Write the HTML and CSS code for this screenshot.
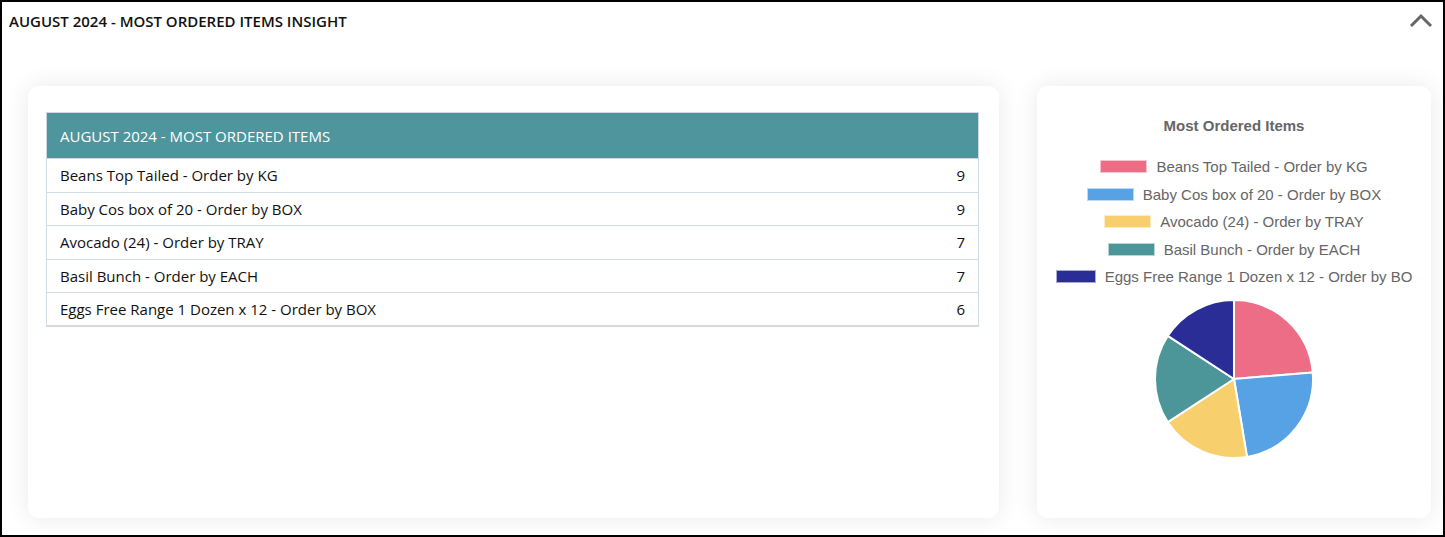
FILE: index.html
```html
<!DOCTYPE html>
<html lang="en">

<head>
  <meta charset="UTF-8">
  <meta name="viewport" content="width=device-width, initial-scale=1.0">
  <title>Most Ordered Items Insight</title>
  <link rel="stylesheet" href="styles.css">
</head>

<body>
  <div class="insight-panel">
    <header class="panel-header">
      <h2>AUGUST 2024 - MOST ORDERED ITEMS INSIGHT</h2>
      <svg class="collapse-icon" width="24" height="16" viewBox="0 0 24 16">
        <path d="M2 14 L12 4 L22 14" fill="none" stroke="#666" stroke-width="3" />
      </svg>
    </header>

    <div class="panel-body">
      <section class="card table-card">
        <table class="items-table">
          <thead>
            <tr>
              <th colspan="2">AUGUST 2024 - MOST ORDERED ITEMS</th>
            </tr>
          </thead>
          <tbody>
            <tr>
              <td>Beans Top Tailed - Order by KG</td>
              <td class="count">9</td>
            </tr>
            <tr>
              <td>Baby Cos box of 20 - Order by BOX</td>
              <td class="count">9</td>
            </tr>
            <tr>
              <td>Avocado (24) - Order by TRAY</td>
              <td class="count">7</td>
            </tr>
            <tr>
              <td>Basil Bunch - Order by EACH</td>
              <td class="count">7</td>
            </tr>
            <tr>
              <td>Eggs Free Range 1 Dozen x 12 - Order by BOX</td>
              <td class="count">6</td>
            </tr>
          </tbody>
        </table>
      </section>

      <section class="card chart-card">
        <h3 class="chart-title">Most Ordered Items</h3>
        <ul class="legend">
          <li><span class="swatch pink"></span>Beans Top Tailed - Order by KG</li>
          <li><span class="swatch blue"></span>Baby Cos box of 20 - Order by BOX</li>
          <li><span class="swatch yellow"></span>Avocado (24) - Order by TRAY</li>
          <li><span class="swatch teal"></span>Basil Bunch - Order by EACH</li>
          <li><span class="swatch navy narrow"></span>Eggs Free Range 1 Dozen x 12 - Order by BO</li>
        </ul>
        <svg class="pie" width="170" height="170" viewBox="-85 -85 170 170">
          <g stroke="#fff" stroke-width="2" stroke-linejoin="round">
            <path d="M0 0 L0 -79 A79 79 0 0 1 78.73 -6.52 Z" fill="#ee6d86" />
            <path d="M0 0 L78.73 -6.52 A79 79 0 0 1 13.00 77.92 Z" fill="#57a1e5" />
            <path d="M0 0 L13.00 77.92 A79 79 0 0 1 -66.14 43.21 Z" fill="#f7d06d" />
            <path d="M0 0 L-66.14 43.21 A79 79 0 0 1 -66.14 -43.21 Z" fill="#4c9699" />
            <path d="M0 0 L-66.14 -43.21 A79 79 0 0 1 0 -79 Z" fill="#2a2d96" />
          </g>
        </svg>
      </section>
    </div>
  </div>
</body>

</html>
```

FILE: styles.css
```css
body {
  margin: 0;
  padding: 0;
  font-family: "Open Sans", sans-serif;
  background-color: #fff;
}

.insight-panel {
  height: 537px;
  box-sizing: border-box;
  border: 2px solid #000;
  display: flex;
  flex-direction: column;
}

.panel-header {
  display: flex;
  justify-content: space-between;
  align-items: center;
  padding: 9px 10px 0 7px;
}

.panel-header h2 {
  margin: 0;
  font-size: 15px;
  font-weight: 600;
  line-height: 21px;
  color: #111;
}

.collapse-icon {
  display: block;
  margin-top: -4px;
}

.panel-body {
  flex: 1;
  display: flex;
  gap: 38px;
  padding: 54px 12px 17px 26px;
}

.card {
  background-color: #fff;
  border-radius: 11px;
  box-shadow: 0 0 24px rgba(0, 0, 0, 0.09);
}

.table-card {
  flex: 1;
  padding: 26px 20px 0 18px;
}

.items-table {
  width: 100%;
  border-collapse: collapse;
  font-size: 15px;
  color: #111;
}

.items-table th {
  background-color: #4e959d;
  color: #fff;
  font-weight: 400;
  text-align: left;
  height: 46px;
  padding: 0 13px;
  border: 1px solid #cfd8df;
  box-sizing: border-box;
}

.items-table td {
  height: 33.5px;
  padding: 0 13px;
  border-top: 1px solid #d3dbe2;
  box-sizing: border-box;
}

.items-table td:first-child {
  border-left: 1px solid #d3dbe2;
}

.items-table td:last-child {
  border-right: 1px solid #d3dbe2;
}

.items-table tr:last-child td {
  border-bottom: 2px solid #d3dbe2;
}

.items-table .count {
  text-align: right;
}

.chart-card {
  width: 394px;
  display: flex;
  flex-direction: column;
  align-items: center;
  font-family: "Liberation Sans", Arial, sans-serif;
  color: #666;
}

.chart-title {
  margin: 32px 0 0;
  font-size: 15px;
  font-weight: 700;
  line-height: 16px;
}

.legend {
  list-style: none;
  margin: 19px 0 0;
  padding: 0;
  font-size: 15px;
}

.legend li {
  height: 27.5px;
  display: flex;
  justify-content: center;
  align-items: center;
  white-space: nowrap;
}

.swatch {
  display: inline-block;
  width: 47px;
  height: 13px;
  margin-right: 9px;
  box-sizing: border-box;
  border: 1px solid rgba(255, 255, 255, 0.6);
}

.swatch.narrow {
  width: 40px;
}

.pink { background-color: #ee6d86; }
.blue { background-color: #57a1e5; }
.yellow { background-color: #f7d06d; }
.teal { background-color: #4c9699; }
.navy { background-color: #2a2d96; }

.pie {
  display: block;
  margin-top: 3px;
}
```
